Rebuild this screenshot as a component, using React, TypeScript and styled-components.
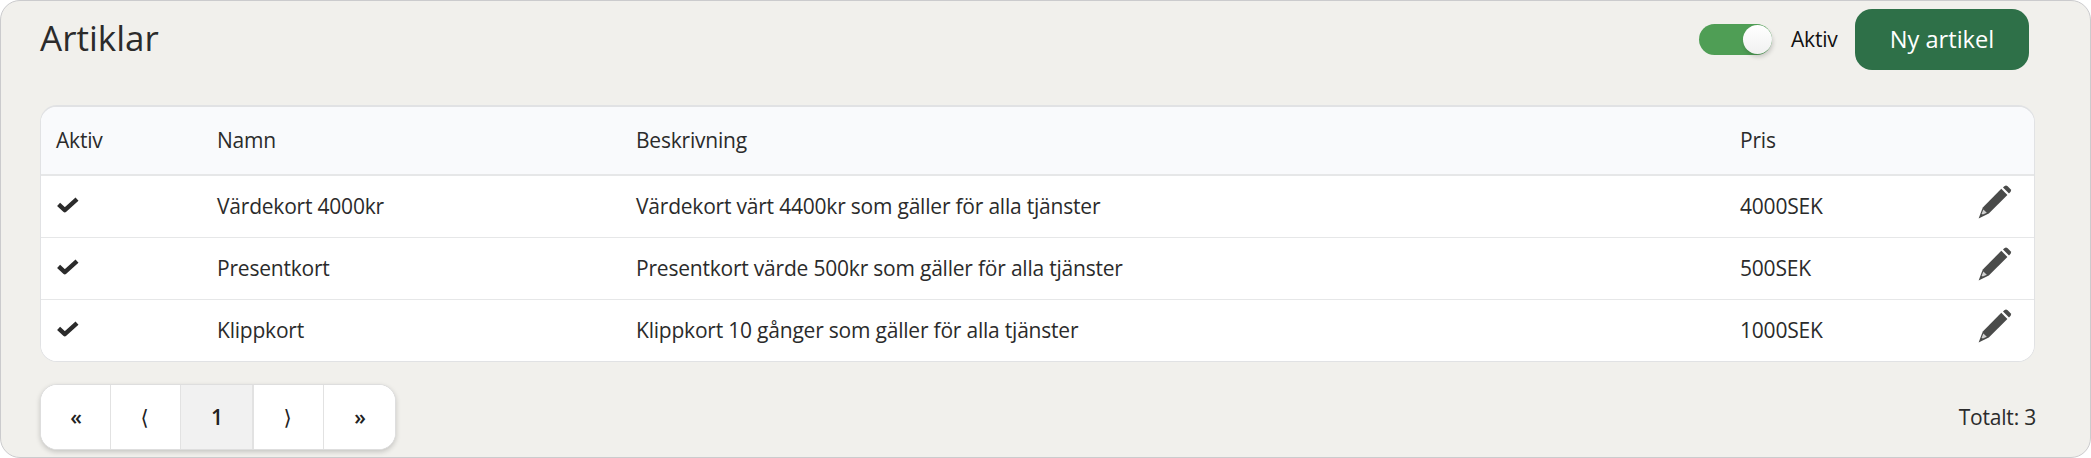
import React from "react";
import styled, { createGlobalStyle } from "styled-components";

const GlobalStyle = createGlobalStyle`
  * { box-sizing: border-box; }
  body { margin: 0; background: #fff; }
`;

const Panel = styled.main`
  width: 2091px;
  height: 458px;
  border: 1px solid #cbcbcd;
  border-radius: 20px;
  background: #f1f0ec;
  padding: 8px 55px 0 39px;
  font-family: "Open Sans", "Noto Sans", sans-serif;
  font-size: 21px;
  letter-spacing: -0.21px;
  line-height: 28px;
  color: #2b2b2b;
  overflow: hidden;
`;

const Header = styled.header`
  display: flex;
  align-items: center;
  height: 60px;
  padding-right: 6px;
`;

const Title = styled.h1`
  margin: 0;
  flex: 1;
  font-size: 35px;
  font-weight: 400;
  line-height: 44px;
  letter-spacing: 0;
  padding-bottom: 2px;
`;

const Switch = styled.span`
  display: flex;
  justify-content: flex-end;
  width: 73px;
  height: 31px;
  border-radius: 16px;
  background: #4f9e55;
`;

const Knob = styled.span`
  width: 29px;
  height: 29px;
  margin-top: 1px;
  border-radius: 50%;
  background: linear-gradient(#fff, #f1f1f1);
  box-shadow: 1px 3px 4px rgba(0, 0, 0, 0.17);
`;

const SwitchLabel = styled.span`
  width: 65px;
  padding: 0 0 1px 19px;
  color: #111;
`;

const PrimaryButton = styled.button`
  width: 174px;
  height: 61px;
  margin-left: 18px;
  border: 0;
  border-radius: 17px;
  background: #2e7048;
  color: #fff;
  font: 400 23.6px "Open Sans", sans-serif;
  padding: 0;
`;

const Table = styled.section`
  margin-top: 36px;
  border: 1px solid #e1e2e4;
  border-top-width: 2px;
  border-radius: 17px;
  background: #fff;
  overflow: hidden;
`;

const Row = styled.div<{ $head?: boolean }>`
  display: grid;
  grid-template-columns: 161px 419px 1104px 1fr 56px;
  align-items: center;
  height: ${(p) => (p.$head ? 69 : 62)}px;
  padding: 0 0 ${(p) => (p.$head ? 1 : 2)}px 15px;
  background: ${(p) => (p.$head ? "#f9fafc" : "#fff")};
  border-bottom: ${(p) => (p.$head ? 2 : 1)}px solid #e6e7e8;
  &:last-child { height: 61px; border-bottom: 0; }
`;

const CheckIcon = () => (
  <svg width="24" height="17" viewBox="0 0 24 17">
    <path d="M2.6 7.4 8.8 13.2 21 2.2" fill="none" stroke="#2b2b2b" strokeWidth="4.4" strokeLinejoin="round" />
  </svg>
);

const Pencil = styled.svg`
  display: block;
  margin-top: -7px;
`;

const PencilIcon = () => (
  <Pencil width="34" height="34" viewBox="0 0 34 34" fill="#4a4b4a">
    <path d="M23.3 3.8 29.4 9.9 10.8 28.4 0.6 33.4 4.8 22.4Z" />
    <path d="M25 2.6 26.6 1Q28 0 29.4 1L32.6 4.2Q33.6 5.5 32.6 6.7L31 8.4Z" />
    <path d="M5.4 24.6 8.8 27.8 4.8 29.6 3.6 28.8Z" fill="#d0d0d0" />
  </Pencil>
);

const Footer = styled.footer`
  display: flex;
  align-items: flex-start;
  justify-content: space-between;
  margin-top: 22px;
  margin-right: -1px;
`;

const Pager = styled.nav`
  display: flex;
  height: 66px;
  border: 1px solid #dedede;
  border-radius: 17px;
  background: #fff;
  overflow: hidden;
  box-shadow: 0 2px 5px rgba(0, 0, 0, 0.18);
`;

const PageButton = styled.button<{ $w: number; $active?: boolean; $thin?: boolean }>`
  width: ${(p) => p.$w}px;
  border: 0;
  border-right: ${(p) => (p.$active ? 2 : 1)}px solid #e2e2e2;
  padding: ${(p) => (p.$thin ? "0 2px 1px 0" : "0 0 1px 1px")};
  background: ${(p) => (p.$active ? "#f1f1f1" : "#fff")};
  color: #222;
  font: ${(p) => (p.$thin ? 400 : 600)} 21px "Open Sans", "DejaVu Sans", sans-serif;
  &:last-child { border-right: 0; }
`;

const Total = styled.span`
  margin-top: 19px;
`;

const articles = [
  ["Värdekort 4000kr", "Värdekort värt 4400kr som gäller för alla tjänster", "4000SEK"],
  ["Presentkort", "Presentkort värde 500kr som gäller för alla tjänster", "500SEK"],
  ["Klippkort", "Klippkort 10 gånger som gäller för alla tjänster", "1000SEK"],
];

export default function App() {
  return (
    <>
      <GlobalStyle />
      <Panel>
        <Header>
          <Title>Artiklar</Title>
          <Switch><Knob /></Switch>
          <SwitchLabel>Aktiv</SwitchLabel>
          <PrimaryButton>Ny artikel</PrimaryButton>
        </Header>
        <Table>
          <Row $head>
            <span>Aktiv</span>
            <span>Namn</span>
            <span>Beskrivning</span>
            <span>Pris</span>
          </Row>
          {articles.map(([name, text, price]) => (
            <Row key={name}>
              <CheckIcon />
              <span>{name}</span>
              <span>{text}</span>
              <span>{price}</span>
              <PencilIcon />
            </Row>
          ))}
        </Table>
        <Footer>
          <Pager>
            <PageButton $w={70}>«</PageButton>
            <PageButton $w={70} $thin>⟨</PageButton>
            <PageButton $w={73} $active>1</PageButton>
            <PageButton $w={70} $thin>⟩</PageButton>
            <PageButton $w={71}>»</PageButton>
          </Pager>
          <Total>Totalt: 3</Total>
        </Footer>
      </Panel>
    </>
  );
}
